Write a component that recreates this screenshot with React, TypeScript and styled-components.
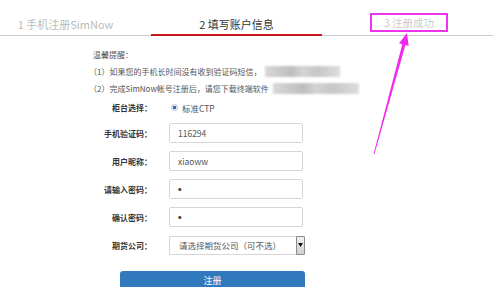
import React from "react";
import styled, { createGlobalStyle } from "styled-components";

const GlobalStyle = createGlobalStyle`
  html, body {
    margin: 0;
    padding: 0;
    background: #fff;
    font-family: "Noto Sans CJK SC", "Liberation Sans", sans-serif;
    color: #555;
  }
`;

const steps = [
  { label: "1 手机注册SimNow", state: "done" },
  { label: "2 填写账户信息", state: "active" },
  { label: "3 注册成功", state: "todo" },
];

const App = () => {
  return (
    <>
      <GlobalStyle />
      <Page>
        <StepBar>
          {steps.map((s) => (
            <Step key={s.label} $state={s.state}>
              {s.state === "todo" ? <Marked>{s.label}</Marked> : s.label}
            </Step>
          ))}
        </StepBar>

        <Notice>
          <NoticeTitle>温馨提醒：</NoticeTitle>
          <NoticeLine>
            （1）如果您的手机长时间没有收到验证码短信，
            <Blur $w={75} />
          </NoticeLine>
          <NoticeLine>
            （2）完成SimNow帐号注册后，请您下载终端软件
            <Blur $w={86} />
          </NoticeLine>
        </Notice>

        <Form>
          <RadioRow>
            <Label>柜台选择：</Label>
            <RadioWrap>
              <RadioDot />
              标准CTP
            </RadioWrap>
          </RadioRow>
          <Row>
            <Label>手机验证码：</Label>
            <Field readOnly value="116294" />
          </Row>
          <Row>
            <Label>用户昵称：</Label>
            <Field readOnly value="xiaoww" />
          </Row>
          <Row>
            <Label>请输入密码：</Label>
            <Field readOnly value="●" $dots />
          </Row>
          <Row>
            <Label>确认密码：</Label>
            <Field readOnly value="●" $dots />
          </Row>
          <Row>
            <Label>期货公司：</Label>
            <SelectBox>
              <SelectText>请选择期货公司（可不选）</SelectText>
              <SelectArrow>
                <svg width="5" height="4" viewBox="0 0 5 4">
                  <polygon points="0,0 5,0 2.5,4" fill="#111" />
                </svg>
              </SelectArrow>
            </SelectBox>
          </Row>
          <SubmitButton>注册</SubmitButton>
        </Form>

        <Arrow width="500" height="287" viewBox="0 0 500 287">
          <polygon
            points="373.6,154 402.3,44.2 399,43.3 407,33 408.7,45.9 405.4,45 374.4,154.3"
            fill="#ee2aee"
          />
        </Arrow>
      </Page>
    </>
  );
};

export default App;

const Page = styled.div`
  position: relative;
  width: 500px;
  height: 287px;
  overflow: hidden;
`;

const StepBar = styled.div`
  display: flex;
  margin-left: -20px;
  width: 513px;
`;

const Step = styled.div<{ $state: string }>`
  width: 171px;
  height: 36px;
  box-sizing: border-box;
  padding-top: ${(p) => (p.$state === "todo" ? "13px" : "16px")};
  text-align: center;
  font-size: 11px;
  line-height: 16px;
  color: ${(p) =>
    p.$state === "active" ? "#333" : p.$state === "done" ? "#bbb" : "#ccc"};
  border-bottom: ${(p) =>
    p.$state === "active" ? "2px solid #c8161d" : "1px solid #ccc"};
`;

const Marked = styled.span`
  display: inline-block;
  margin-left: 3px;
  padding: 0 12px;
  line-height: 15px;
  font-size: 10.5px;
  border: 2px solid #ee33ee;
`;

const Notice = styled.div`
  margin: 10px 0 0 89px;
  font-size: 8px;
  line-height: 17px;
  color: #555;
`;

const NoticeTitle = styled.div`
  padding-left: 4px;
`;

const NoticeLine = styled.div`
  display: flex;
  align-items: center;
  white-space: nowrap;
`;

const Blur = styled.span<{ $w: number }>`
  display: inline-block;
  width: ${(p) => p.$w}px;
  height: 11px;
  margin-left: 4px;
  background: linear-gradient(
    90deg,
    #d8d8d8 0%,
    #c9c9c9 20%,
    #bdbdbd 35%,
    #d4d4d4 50%,
    #c6c6c6 70%,
    #dedede 100%
  );
  filter: blur(1px);
`;

const Form = styled.div`
  display: flex;
  flex-direction: column;
  gap: 8px;
  margin: 3px 0 0 88px;
`;

const Row = styled.div`
  display: flex;
  align-items: center;
  gap: 17px;
  height: 20px;
`;

const RadioRow = styled(Row)`
  height: 15px;
`;

const Label = styled.div`
  width: 64px;
  text-align: right;
  font-size: 8px;
  font-weight: bold;
  color: #333;
  white-space: nowrap;
`;

const RadioWrap = styled.div`
  display: flex;
  align-items: center;
  gap: 4px;
  margin-left: 2px;
  font-size: 8.5px;
  color: #555;
`;

const RadioDot = styled.span`
  width: 5px;
  height: 5px;
  border-radius: 50%;
  border: 1px solid #b8c4d4;
  background: radial-gradient(circle, #3c6cb0 0 45%, #e8eef6 55%);
`;

const Field = styled.input<{ $dots?: boolean }>`
  width: 134px;
  height: 20px;
  box-sizing: border-box;
  padding: 0 8px;
  border: 1px solid #d6d6d6;
  border-radius: 2px;
  font-family: inherit;
  font-size: ${(p) => (p.$dots ? "3.5px" : "8.5px")};
  color: ${(p) => (p.$dots ? "#444" : "#555")};
  outline: none;
  background: #fff;
`;

const SelectBox = styled.div`
  display: flex;
  align-items: center;
  width: 136px;
  height: 19px;
  box-sizing: border-box;
  border: 1px solid #d6d6d6;
  border-right: none;
  border-radius: 2px;
  background: #fff;
`;

const SelectText = styled.span`
  flex: 1;
  padding-left: 9px;
  font-size: 8.5px;
  color: #555;
  white-space: nowrap;
`;

const SelectArrow = styled.span`
  display: flex;
  align-items: center;
  justify-content: center;
  width: 9px;
  height: 19px;
  box-sizing: border-box;
  border: 1px solid #8a8a8a;
  border-radius: 1px;
  background: linear-gradient(#f2f2f2, #cfcfcf);
`;

const SubmitButton = styled.div`
  width: 185px;
  height: 30px;
  margin: 8px 0 0 32px;
  border-radius: 3px;
  background: #3079bd;
  color: #fff;
  font-size: 9px;
  line-height: 20px;
  text-align: center;
`;

const Arrow = styled.svg`
  position: absolute;
  left: 0;
  top: 0;
  pointer-events: none;
`;
